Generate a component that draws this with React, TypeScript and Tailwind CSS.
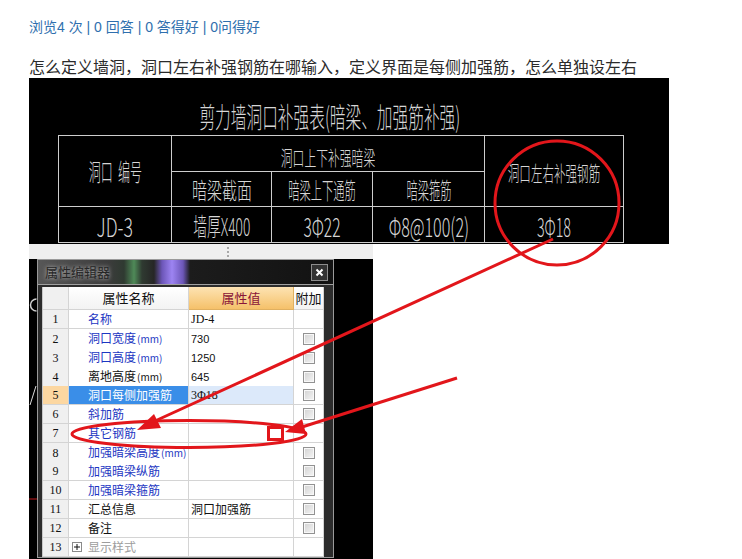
import React from "react";

type Row = {
  n: number;
  name: string;
  unit?: string;
  tone: "blue" | "black" | "gray";
  value?: string;
  valueKind?: "serif" | "sans" | "cjk";
  check: boolean;
  selected?: boolean;
  expander?: boolean;
};

const rows: Row[] = [
  { n: 1, name: "名称", tone: "blue", value: "JD-4", valueKind: "serif", check: false },
  { n: 2, name: "洞口宽度", unit: "(mm)", tone: "blue", value: "730", valueKind: "sans", check: true },
  { n: 3, name: "洞口高度", unit: "(mm)", tone: "blue", value: "1250", valueKind: "sans", check: true },
  { n: 4, name: "离地高度", unit: "(mm)", tone: "black", value: "645", valueKind: "sans", check: true },
  { n: 5, name: "洞口每侧加强筋", tone: "blue", value: "3Φ18", valueKind: "serif", check: true, selected: true },
  { n: 6, name: "斜加筋", tone: "blue", check: true },
  { n: 7, name: "其它钢筋", tone: "blue", check: false },
  { n: 8, name: "加强暗梁高度", unit: "(mm)", tone: "blue", check: true },
  { n: 9, name: "加强暗梁纵筋", tone: "blue", check: true },
  { n: 10, name: "加强暗梁箍筋", tone: "blue", check: true },
  { n: 11, name: "汇总信息", tone: "black", value: "洞口加强筋", valueKind: "cjk", check: true },
  { n: 12, name: "备注", tone: "black", check: true },
  { n: 13, name: "显示样式", tone: "gray", check: false, expander: true },
];

function Cad({ children, cls }: { children: React.ReactNode; cls: string }) {
  return <span className={"inline-block whitespace-pre text-[#d6d6d6] " + cls}>{children}</span>;
}

function CadCell({ children, cls = "" }: { children: React.ReactNode; cls?: string }) {
  return (
    <div className={"flex items-center justify-center border-b border-r border-[#cdcdcd] " + cls}>{children}</div>
  );
}

function CadDrawing() {
  return (
    <div className="h-[166px] w-[640px] bg-black font-['Noto_Sans_CJK_SC',sans-serif] font-light">
      <div className="flex h-[57px] w-[602px] justify-center pt-[24px]">
        <Cad cls="text-[28px] leading-[28px] scale-x-[0.56]">剪力墙洞口补强表(暗梁、加强筋补强)</Cad>
      </div>
      <div className="ml-[29px] grid w-[566px] grid-cols-[113px_100px_101px_112px_139px] grid-rows-[36px_35px_36px] border-l border-t border-[#cdcdcd]">
        <CadCell cls="row-span-2">
          <Cad cls="text-[24px] leading-[24px] scale-x-[0.5]">洞口  编号</Cad>
        </CadCell>
        <CadCell cls="col-span-3 pt-[9px]">
          <Cad cls="text-[20px] leading-[20px] scale-x-[0.59]">洞口上下补强暗梁</Cad>
        </CadCell>
        <CadCell cls="row-span-2 pt-[2px]">
          <Cad cls="text-[21px] leading-[21px] scale-x-[0.55]">洞口左右补强钢筋</Cad>
        </CadCell>
        <CadCell>
          <Cad cls="text-[23px] leading-[23px] scale-x-[0.65]">暗梁截面</Cad>
        </CadCell>
        <CadCell>
          <Cad cls="text-[23px] leading-[23px] scale-x-[0.49]">暗梁上下通筋</Cad>
        </CadCell>
        <CadCell>
          <Cad cls="text-[23px] leading-[23px] scale-x-[0.49]">暗梁箍筋</Cad>
        </CadCell>
        <CadCell cls="pt-[2px]">
          <Cad cls="text-[26px] leading-[26px] scale-x-[0.68]">JD-3</Cad>
        </CadCell>
        <CadCell cls="pt-[2px]">
          <Cad cls="text-[25px] leading-[25px] scale-x-[0.55]">墙厚X400</Cad>
        </CadCell>
        <CadCell cls="pt-[2px]">
          <Cad cls="text-[26px] leading-[26px] scale-x-[0.6]">3Φ22</Cad>
        </CadCell>
        <CadCell cls="pt-[2px]">
          <Cad cls="text-[26px] leading-[26px] scale-x-[0.62]">Φ8@100(2)</Cad>
        </CadCell>
        <CadCell cls="pt-[2px]">
          <Cad cls="text-[26px] leading-[26px] scale-x-[0.55]">3Φ18</Cad>
        </CadCell>
      </div>
    </div>
  );
}

function Checkbox() {
  return (
    <span className="block size-[12px] border border-[#929292] bg-[linear-gradient(135deg,#d2d2d2,#f5f5f5)] shadow-[inset_0_0_0_1px_#f8f8f8]" />
  );
}

function GridRow({ row }: { row: Row }) {
  const tone =
    row.selected ? "text-white" : row.tone === "blue" ? "text-[#1c36c2]" : row.tone === "black" ? "text-[#111]" : "text-[#9d9d9d]";
  const valueFont =
    row.valueKind === "serif"
      ? "font-['Liberation_Serif',serif] text-[12px]"
      : row.valueKind === "sans"
        ? "font-['Liberation_Sans',sans-serif] text-[11px]"
        : "font-['Noto_Sans_CJK_SC',sans-serif] text-[12px]";
  return (
    <div className="grid h-[19px] grid-cols-[26px_120px_105px_30px] text-[12px] leading-[18px]">
      <div
        className={
          "flex items-center justify-center border-b border-r border-[#d4d4d4] font-['Liberation_Serif',serif] text-[12px] text-[#111] " +
          (row.selected ? "bg-[#fcd7a1]" : "bg-[#f0f0f0]")
        }
      >
        {row.n}
      </div>
      <div
        className={
          "flex items-center border-b border-r border-[#d4d4d4] " +
          (row.selected ? "bg-[#3a8ee8] " : "bg-white ") +
          (row.expander ? "pl-[3px]" : "pl-[19px]")
        }
      >
        {row.expander && (
          <span className="mr-[6px] flex size-[10px] items-center justify-center border border-[#8a8a8a] bg-white">
            <svg width="8" height="8" viewBox="0 0 8 8">
              <path d="M1 4h6M4 1v6" stroke="#111" strokeWidth="1" />
            </svg>
          </span>
        )}
        <span className={"whitespace-nowrap font-['Noto_Sans_CJK_SC',sans-serif] " + tone}>
          {row.name}
          {row.unit && <span className="ml-px text-[10px]">{row.unit}</span>}
        </span>
      </div>
      <div
        className={
          "flex items-center border-b border-r border-[#d4d4d4] pl-[2px] text-[#111] " +
          (row.selected ? "bg-[#dce9fa]" : "bg-white")
        }
      >
        {row.value && <span className={"whitespace-nowrap " + valueFont}>{row.value}</span>}
      </div>
      <div className="flex items-center justify-center border-b border-r border-[#d4d4d4] bg-white">
        {row.check && <Checkbox />}
      </div>
    </div>
  );
}

function PropertyEditor() {
  return (
    <div className="w-[297px] border border-[#9a9a9a] bg-[#2c2c2c]">
      <div className="flex h-[24px] items-start justify-between bg-[linear-gradient(90deg,#575757_0px,#3c3c3c_70px,#2f3a31_86px,#4f8a58_96px,#2f3a31_104px,#262626_116px,#6c56b8_124px,#9d84f2_134px,#6c56b8_145px,#1c1c1c_152px,#121212_100%)] pl-[7px] pr-[5px]">
        <span className="mt-[3px] font-['Noto_Sans_CJK_SC',sans-serif] text-[13px] leading-[18px] text-[#262626] [text-shadow:0_0_4px_rgba(220,220,220,0.9)]">
          属性编辑器
        </span>
        <span className="mt-[4px] flex size-[17px] items-center justify-center border border-[#8d8d8d] bg-[#333]">
          <svg width="9" height="9" viewBox="0 0 9 9">
            <path d="M1.5 1.5l6 6M7.5 1.5l-6 6" stroke="#fff" strokeWidth="2" />
          </svg>
        </span>
      </div>
      <div className="border-t border-[#a0a0a0] pl-[4px] pr-[9px] pt-[2px]">
        <div className="w-[282px] border-l border-[#c8c8c8]">
          <div className="grid h-[23px] grid-cols-[26px_120px_105px_30px] font-['Noto_Sans_CJK_SC',sans-serif] text-[13px] leading-[22px]">
            <div className="border-b border-r border-[#d4d4d4] bg-[#f0f0f0]" />
            <div className="flex items-center justify-center border-b border-r border-[#d4d4d4] bg-[linear-gradient(#ffffff,#f3f3f3)] text-[#111]">
              属性名称
            </div>
            <div className="flex items-center justify-center border-b border-r border-[#e0b060] bg-[linear-gradient(#fde3b3,#f5c16a)] text-[#8a1538]">
              属性值
            </div>
            <div className="flex items-center justify-center border-b border-r border-[#d4d4d4] bg-[linear-gradient(#ffffff,#f3f3f3)] text-[#111]">
              附加
            </div>
          </div>
          {rows.map((row) => (
            <GridRow key={row.n} row={row} />
          ))}
        </div>
      </div>
    </div>
  );
}

function Annotations() {
  const red = "#e2161b";
  return (
    <svg className="pointer-events-none absolute left-0 top-0" width="742" height="559" viewBox="0 0 742 559">
      <path d="M36.5 299 A6 6 0 0 0 36.5 311" fill="none" stroke="#cfcfcf" strokeWidth="1.5" />
      <line x1="30" y1="405" x2="36" y2="386" stroke="#dcdcdc" strokeWidth="1" />
      <line x1="29" y1="499" x2="37" y2="499" stroke="#c0181c" strokeWidth="1" />
      <circle cx="557" cy="203" r="62" fill="none" stroke={red} strokeWidth="3" />
      <line x1="553" y1="239" x2="155" y2="421" stroke={red} strokeWidth="3" />
      <polygon points="137,430 161,428 154,414" fill={red} />
      <ellipse cx="189" cy="434" rx="117" ry="13.5" fill="none" stroke={red} strokeWidth="3" />
      <line x1="457" y1="378" x2="302" y2="427" stroke={red} strokeWidth="3" />
      <polygon points="285,432 306,434 302,419" fill={red} />
      <rect x="268.5" y="427.5" width="14" height="12" fill="none" stroke={red} strokeWidth="3" />
    </svg>
  );
}

export default function App() {
  return (
    <div className="relative h-[559px] w-[742px] overflow-hidden bg-white font-['Liberation_Sans','Noto_Sans_CJK_SC',sans-serif]">
      <div className="pl-[29px] pt-[17px]">
        <p className="text-[14px] leading-[20px] text-[#2f6fae]">浏览4 次 | 0 回答 | 0 答得好 | 0问得好</p>
        <p className="mt-[18px] font-['Noto_Sans_CJK_SC',sans-serif] text-[16px] leading-[22px] text-[#2b2b2b]">
          怎么定义墙洞，洞口左右补强钢筋在哪输入，定义界面是每侧加强筋，怎么单独设左右
        </p>
        <div className="mt-px">
          <CadDrawing />
        </div>
        <div className="w-[344px]">
          <div className="flex h-[15px] flex-col gap-[2px] bg-[#efefef] pl-[198px] pt-[3px]">
            <span className="size-[2px] bg-[#a8a8a8]" />
            <span className="size-[2px] bg-[#a8a8a8]" />
            <span className="size-[2px] bg-[#a8a8a8]" />
          </div>
          <div className="h-[300px] bg-black pl-[8px]">
            <PropertyEditor />
          </div>
        </div>
      </div>
      <Annotations />
    </div>
  );
}
